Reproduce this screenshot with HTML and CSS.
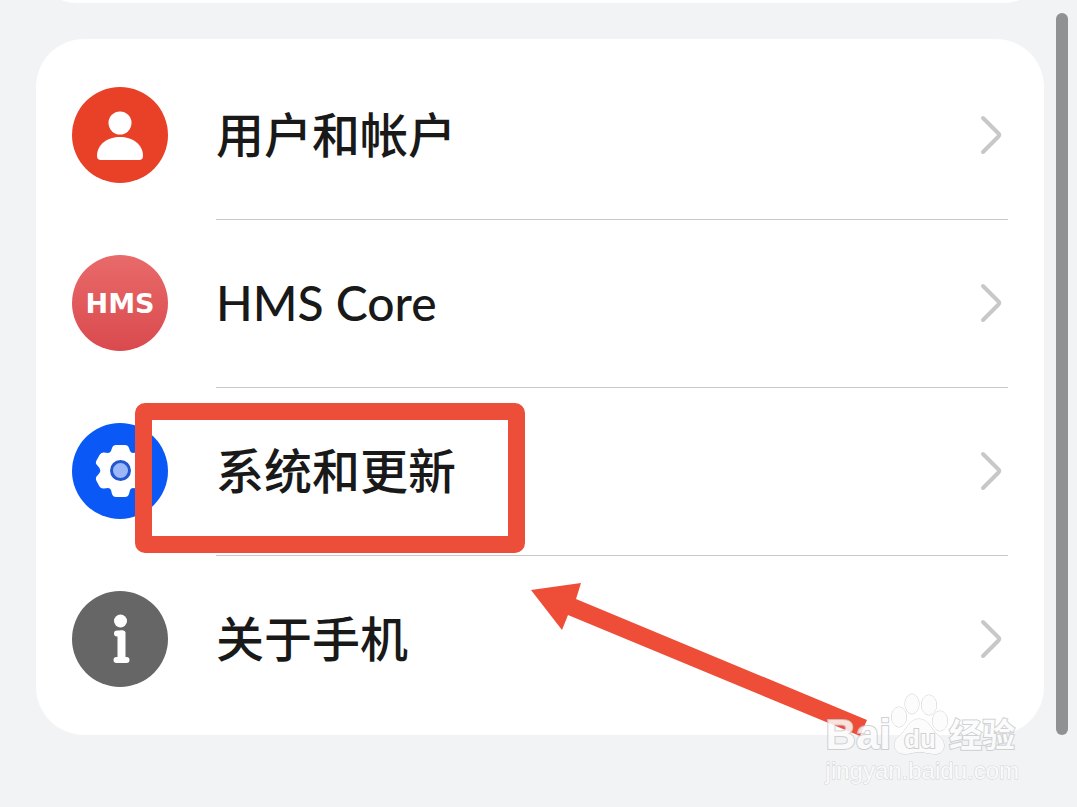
FILE: index.html
```
<!DOCTYPE html>
<html lang="zh-CN">
<head>
    <meta charset="UTF-8">
    <meta name="viewport" content="width=device-width, initial-scale=1.0">
    <title>设置</title>
    <link rel="stylesheet" href="styles.css">
</head>
<body>
    <main class="page">
        <div class="card card-prev"></div>

        <nav class="card">
            <a class="row" href="#account">
                <svg class="row-icon" viewBox="0 0 96 96" aria-hidden="true">
                    <circle cx="48" cy="48" r="48" fill="#e84128"/>
                    <circle cx="48" cy="36" r="11.5" fill="#fff"/>
                    <path d="M25 69C25 57 36 50 48 50S71 57 71 69Q71 73 67 73H29Q25 73 25 69Z" fill="#fff"/>
                </svg>
                <span class="row-body">
                    <span class="row-label">用户和帐户</span>
                    <svg class="chevron" viewBox="0 0 32 48" aria-hidden="true"><path d="M7 7L22.5 22.5Q24 24 22.5 25.5L7 41"/></svg>
                </span>
            </a>

            <a class="row" href="#hms">
                <span class="row-icon hms-icon">HMS</span>
                <span class="row-body">
                    <span class="row-label">HMS Core</span>
                    <svg class="chevron" viewBox="0 0 32 48" aria-hidden="true"><path d="M7 7L22.5 22.5Q24 24 22.5 25.5L7 41"/></svg>
                </span>
            </a>

            <a class="row" href="#system">
                <svg class="row-icon" viewBox="0 0 96 96" aria-hidden="true">
                    <circle cx="48" cy="48" r="48" fill="#0a59f7"/>
                    <path d="M44 22H53Q56 22 57 25L58 28Q59 30 61 30L65 29.500Q68 29 70 32L73 37.500Q74 40 73 42L70.500 45Q69 47.500 70.500 50L73 53Q74 56 73 58L69.500 63.500Q68 66 65 65.500L61 65Q59 65 58 67L57 71Q56 74 53 74H44Q41 74 40 71L39 67Q38 65 36 65L32 65.500Q29 66 27.500 63.500L24.500 58Q23 55 25 53L27.500 50Q29 47.500 27.500 45L25 42Q23 40 24.500 37.500L27.500 32Q29 29 32 29.500L36 30Q38 30 39 28L40 25Q41 22 44 22Z" fill="#fff"/>
                    <circle cx="48.500" cy="47.500" r="9" fill="#9db8f9" stroke="#2257cf" stroke-width="3"/>
                </svg>
                <span class="row-body">
                    <span class="row-label">系统和更新</span>
                    <svg class="chevron" viewBox="0 0 32 48" aria-hidden="true"><path d="M7 7L22.5 22.5Q24 24 22.5 25.5L7 41"/></svg>
                </span>
                <span class="highlight"></span>
            </a>

            <a class="row" href="#about">
                <svg class="row-icon" viewBox="0 0 96 96" aria-hidden="true">
                    <circle cx="48" cy="48" r="48" fill="#666"/>
                    <circle cx="48.500" cy="30" r="6.500" fill="#fff"/>
                    <path d="M45 42.500H50V69M44.500 69H54.500" fill="none" stroke="#fff" stroke-width="6" stroke-linecap="round" stroke-linejoin="round"/>
                    <path d="M45.500 42V69H53.500V42Q53.500 39.500 51 39.500H48Z" fill="#fff"/>
                </svg>
                <span class="row-body">
                    <span class="row-label">关于手机</span>
                    <svg class="chevron" viewBox="0 0 32 48" aria-hidden="true"><path d="M7 7L22.5 22.5Q24 24 22.5 25.5L7 41"/></svg>
                </span>
            </a>

            <svg class="arrow" viewBox="0 0 336 154" aria-hidden="true">
                <polygon points="0,7 50,0 45,16 336,137 329,153 37,32 31,47" fill="#ee4d38"/>
            </svg>
        </nav>

        <div class="scrollbar"></div>

        <div class="watermark">
            <div class="wm-brand">
                <span class="wm-bai">Bai</span>
                <span class="wm-paw">
                    <svg viewBox="0 0 58 64" aria-hidden="true">
                        <ellipse cx="8" cy="24" rx="7.500" ry="10"/>
                        <ellipse cx="21" cy="11" rx="7" ry="10"/>
                        <ellipse cx="38" cy="12" rx="7.500" ry="10"/>
                        <ellipse cx="49" cy="28" rx="7.500" ry="10"/>
                        <path d="M28 26C38 26 40 37 48 43C57 51 53 62 43 61C36 60 32 59 28 59C23 59 20 61 14 61C3 61 0 50 8 43C16 37 18 26 28 26Z"/>
                    </svg>
                    <span class="wm-du">du</span>
                </span>
                <span class="wm-jy">经验</span>
            </div>
            <div class="wm-url">jingyan.baidu.com</div>
        </div>
    </main>
</body>
</html>
```

FILE: styles.css
```
* {
    box-sizing: border-box;
}

body {
    margin: 0;
    background: #f1f3f5;
    font-family: Lato, "Noto Sans CJK SC", sans-serif;
    color: #191919;
}

.page {
    position: relative;
    min-height: 100vh;
    padding: 0 33px 72px 36px;
    overflow: hidden;
}

.card {
    position: relative;
    padding: 12px 36px;
    background: #fff;
    border-radius: 48px;
}

.card-prev {
    height: 80px;
    margin: -77px 0 36px;
}

.row {
    position: relative;
    display: flex;
    align-items: center;
    gap: 48px;
    height: 168px;
    color: inherit;
    text-decoration: none;
}

.row-icon {
    flex: none;
    width: 96px;
    height: 96px;
}

.hms-icon {
    display: flex;
    align-items: center;
    justify-content: center;
    border-radius: 50%;
    background: linear-gradient(#e96a6a, #d94a4e);
    color: #fff;
    font: bold 27px "DejaVu Sans", sans-serif;
}

.row-body {
    flex: 1;
    align-self: stretch;
    display: flex;
    align-items: center;
    justify-content: space-between;
}

.row + .row .row-body {
    box-shadow: inset 0 1px #c8c8c8;
}

.row-label {
    font-size: 48px;
    font-weight: 500;
    line-height: 72px;
}

.chevron {
    width: 32px;
    height: 48px;
    fill: none;
    stroke: #c8c8c8;
    stroke-width: 4;
    stroke-linecap: round;
}

/* 红框标注 */
.highlight {
    position: absolute;
    left: 63px;
    top: 16px;
    width: 390px;
    height: 150px;
    border: 17px solid #ec4e3a;
    border-radius: 10px;
}

.arrow {
    position: absolute;
    left: 495px;
    top: 544px;
    width: 336px;
    height: 154px;
}

.scrollbar {
    position: fixed;
    top: 13px;
    right: 9px;
    bottom: 72px;
    width: 12px;
    border-radius: 6px;
    background: #909192;
}

/* 水印 */
.watermark {
    position: absolute;
    right: 58px;
    bottom: 22px;
    color: #fcfcfc;
    font-family: "Liberation Sans", "Noto Sans CJK SC", sans-serif;
    -webkit-text-stroke: 2px #c8c9cb;
    paint-order: stroke fill;
    opacity: 0.85;
}

.wm-brand {
    display: flex;
    align-items: flex-end;
    height: 64px;
    font-weight: bold;
}

.wm-bai {
    font-size: 42px;
    line-height: 44px;
}

.wm-paw {
    position: relative;
    width: 58px;
    height: 64px;
}

.wm-paw svg {
    width: 58px;
    height: 64px;
    fill: #fcfcfc;
    stroke: #c8c9cb;
    stroke-width: 1;
}

.wm-du {
    position: absolute;
    left: 0;
    right: 0;
    bottom: 4px;
    font-size: 26px;
    line-height: 28px;
    text-align: center;
}

.wm-jy {
    font-size: 33px;
    line-height: 42px;
}

.wm-url {
    font-size: 24px;
    line-height: 28px;
    -webkit-text-stroke: 1px #d0d1d3;
}
```
